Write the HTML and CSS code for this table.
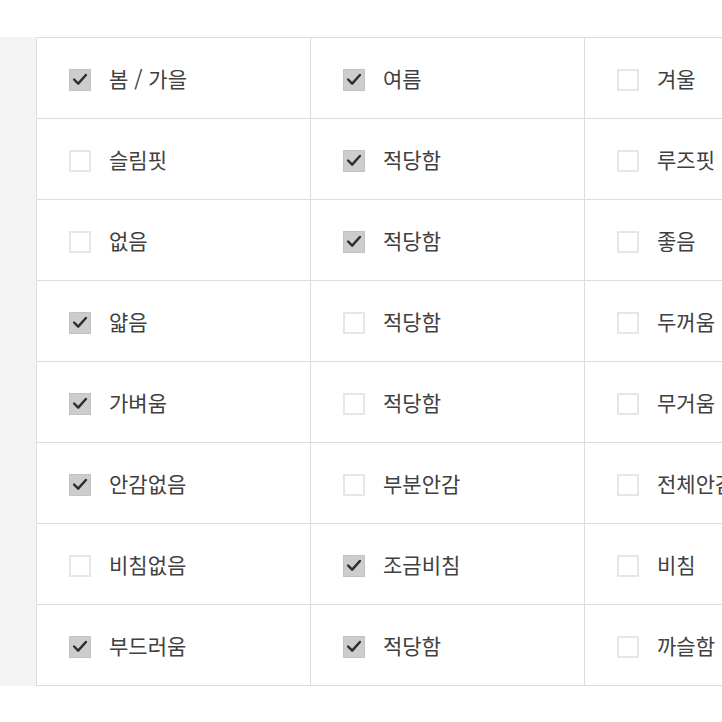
FILE: index.html
```html
<!DOCTYPE html>
<html lang="ko">
<head>
<meta charset="utf-8">
<link rel="stylesheet" href="styles.css">
</head>
<body>
<div class="page">
  <div class="wrap">
    <div class="side"></div>
    <div class="grid">
      <div class="cell"><span class="cb on"><svg viewBox="0 0 22 22"><polyline points="4.5,11 9,15.5 17.5,6"/></svg></span><span class="lbl">봄 / 가을</span></div>
      <div class="cell"><span class="cb on"><svg viewBox="0 0 22 22"><polyline points="4.5,11 9,15.5 17.5,6"/></svg></span><span class="lbl">여름</span></div>
      <div class="cell"><span class="cb"></span><span class="lbl">겨울</span></div>

      <div class="cell"><span class="cb"></span><span class="lbl">슬림핏</span></div>
      <div class="cell"><span class="cb on"><svg viewBox="0 0 22 22"><polyline points="4.5,11 9,15.5 17.5,6"/></svg></span><span class="lbl">적당함</span></div>
      <div class="cell"><span class="cb"></span><span class="lbl">루즈핏</span></div>

      <div class="cell"><span class="cb"></span><span class="lbl">없음</span></div>
      <div class="cell"><span class="cb on"><svg viewBox="0 0 22 22"><polyline points="4.5,11 9,15.5 17.5,6"/></svg></span><span class="lbl">적당함</span></div>
      <div class="cell"><span class="cb"></span><span class="lbl">좋음</span></div>

      <div class="cell"><span class="cb on"><svg viewBox="0 0 22 22"><polyline points="4.5,11 9,15.5 17.5,6"/></svg></span><span class="lbl">얇음</span></div>
      <div class="cell"><span class="cb"></span><span class="lbl">적당함</span></div>
      <div class="cell"><span class="cb"></span><span class="lbl">두꺼움</span></div>

      <div class="cell"><span class="cb on"><svg viewBox="0 0 22 22"><polyline points="4.5,11 9,15.5 17.5,6"/></svg></span><span class="lbl">가벼움</span></div>
      <div class="cell"><span class="cb"></span><span class="lbl">적당함</span></div>
      <div class="cell"><span class="cb"></span><span class="lbl">무거움</span></div>

      <div class="cell"><span class="cb on"><svg viewBox="0 0 22 22"><polyline points="4.5,11 9,15.5 17.5,6"/></svg></span><span class="lbl">안감없음</span></div>
      <div class="cell"><span class="cb"></span><span class="lbl">부분안감</span></div>
      <div class="cell"><span class="cb"></span><span class="lbl">전체안감</span></div>

      <div class="cell"><span class="cb"></span><span class="lbl">비침없음</span></div>
      <div class="cell"><span class="cb on"><svg viewBox="0 0 22 22"><polyline points="4.5,11 9,15.5 17.5,6"/></svg></span><span class="lbl">조금비침</span></div>
      <div class="cell"><span class="cb"></span><span class="lbl">비침</span></div>

      <div class="cell"><span class="cb on"><svg viewBox="0 0 22 22"><polyline points="4.5,11 9,15.5 17.5,6"/></svg></span><span class="lbl">부드러움</span></div>
      <div class="cell"><span class="cb on"><svg viewBox="0 0 22 22"><polyline points="4.5,11 9,15.5 17.5,6"/></svg></span><span class="lbl">적당함</span></div>
      <div class="cell"><span class="cb"></span><span class="lbl">까슬함</span></div>
    </div>
  </div>
</div>
</body>
</html>
```

FILE: styles.css
```css
html, body {
  margin: 0;
  padding: 0;
  background: #fff;
}
.page {
  width: 722px;
  height: 722px;
  overflow: hidden;
  padding-top: 37px;
  box-sizing: border-box;
  font-family: "Noto Sans CJK KR", "Noto Sans", sans-serif;
}
.wrap {
  display: flex;
  width: max-content;
}
.side {
  width: 36px;
  background: #f3f3f3;
}
.grid {
  display: grid;
  grid-template-columns: repeat(3, 274px);
  grid-auto-rows: 81px;
  border-top: 1px solid #dcdcdc;
  border-left: 1px solid #dcdcdc;
  background: #fff;
}
.cell {
  display: flex;
  align-items: center;
  padding-left: 32px;
  padding-top: 3px;
  gap: 18px;
  border-right: 1px solid #dcdcdc;
  border-bottom: 1px solid #dcdcdc;
}
.cb {
  width: 22px;
  height: 22px;
  box-sizing: border-box;
  border: 2px solid #e6e6e6;
  background: #fff;
  display: flex;
  align-items: center;
  justify-content: center;
  flex: none;
}
.cb.on {
  background: #cdcdcd;
  border: 1px solid #c2c2c2;
}
.cb svg {
  width: 21px;
  height: 21px;
}
.cb polyline {
  fill: none;
  stroke: #2e2e2e;
  stroke-width: 2.7;
  stroke-linecap: round;
  stroke-linejoin: round;
}
.lbl {
  font-size: 21px;
  color: #404040;
  line-height: 1;
  white-space: nowrap;
  margin-top: -2px;
}
```
